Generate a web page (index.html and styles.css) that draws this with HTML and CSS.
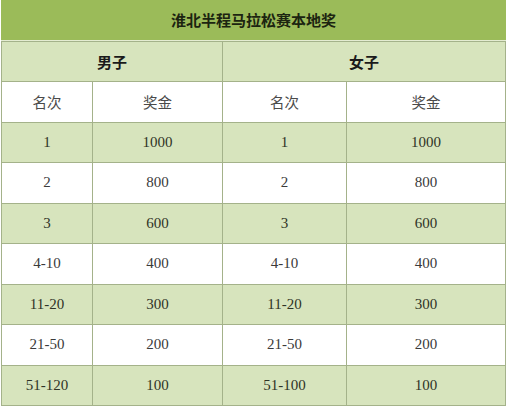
FILE: index.html
```html
<!DOCTYPE html>
<html lang="zh-CN">
<head>
<meta charset="utf-8">
<title>淮北半程马拉松赛本地奖</title>
<link rel="stylesheet" href="styles.css">
</head>
<body>
<div class="sheet">
  <div class="cell title span4">淮北半程马拉松赛本地奖</div>
  <div class="cell group span2">男子</div>
  <div class="cell group span2">女子</div>
  <div class="cell head">名次</div><div class="cell head">奖金</div><div class="cell head">名次</div><div class="cell head">奖金</div>
  <div class="cell g">1</div><div class="cell g">1000</div><div class="cell g">1</div><div class="cell g">1000</div>
  <div class="cell w">2</div><div class="cell w">800</div><div class="cell w">2</div><div class="cell w">800</div>
  <div class="cell g">3</div><div class="cell g">600</div><div class="cell g">3</div><div class="cell g">600</div>
  <div class="cell w">4-10</div><div class="cell w">400</div><div class="cell w">4-10</div><div class="cell w">400</div>
  <div class="cell g">11-20</div><div class="cell g">300</div><div class="cell g">11-20</div><div class="cell g">300</div>
  <div class="cell w">21-50</div><div class="cell w">200</div><div class="cell w">21-50</div><div class="cell w">200</div>
  <div class="cell g">51-120</div><div class="cell g">100</div><div class="cell g">51-100</div><div class="cell g">100</div>
</div>
</body>
</html>
```
FILE: styles.css
```css
html, body {
  margin: 0;
  padding: 0;
  background: #ffffff;
}
body {
  width: 510px;
  height: 409px;
  overflow: hidden;
}
.sheet {
  margin: 0 0 0 1px;
  width: 503px;
  height: 404px;
  padding: 1px;
  display: grid;
  grid-template-columns: 90px 129px 123px 158px;
  grid-template-rows: repeat(10, 1fr);
  gap: 1px;
  background: #a4b28a;
  font-family: "Liberation Serif", "Noto Sans CJK SC", serif;
  font-size: 15px;
  color: #3a3a3a;
}
.cell {
  display: flex;
  align-items: center;
  justify-content: center;
}
.span4 { grid-column: span 4; }
.span2 { grid-column: span 2; }
.title {
  background: #9bbb59;
  font-family: "Noto Sans CJK SC", serif;
  font-weight: 700;
  font-size: 15px;
  color: #1c2410;
  margin: -1px -1px 0 -1px;
  border-bottom: 1px solid #e4ecd2;
}
.group {
  background: #d7e4bd;
  font-family: "Noto Sans CJK SC", serif;
  font-weight: 700;
  font-size: 15px;
  color: #1a1a1a;
}
.head {
  background: #ffffff;
  font-family: "Noto Sans CJK SC", serif;
  font-weight: 400;
  font-size: 14.5px;
  color: #4a4a4a;
}
.g { background: #d7e4bd; color: #2f3326; }
.w { background: #ffffff; }
```
